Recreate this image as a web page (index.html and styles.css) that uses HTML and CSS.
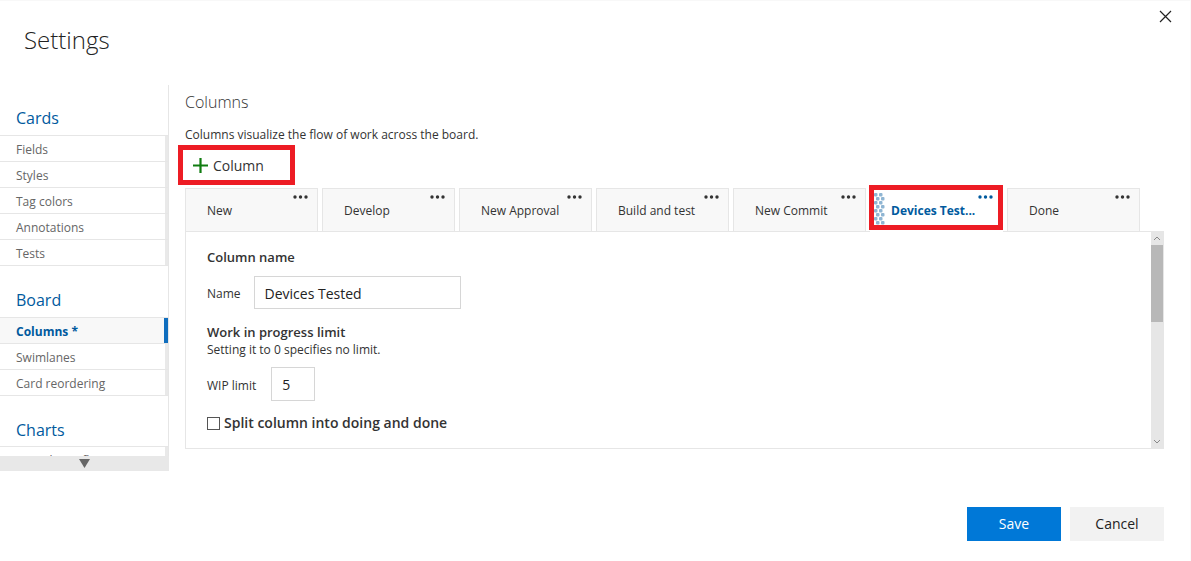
FILE: index.html
```html
<!DOCTYPE html>
<html lang="en">
<head>
<meta charset="utf-8">
<title>Settings</title>
<link rel="stylesheet" href="styles.css">
</head>
<body>
<div class="dialog">
  <header class="dialog-header">
    <h1 class="dialog-title">Settings</h1>
    <button class="close" type="button" aria-label="Close">
      <svg width="13" height="13" viewBox="0 0 13 13"><path d="M1 1l11 11M12 1L1 12" stroke="#222" stroke-width="1.200" fill="none"/></svg>
    </button>
  </header>
  <div class="dialog-body">
    <nav class="sidebar" aria-label="Settings sections">
      <div class="sidebar-scroll">
        <h2 class="group-title">Cards</h2>
        <ul class="group">
          <li><a class="nav-item" href="#fields">Fields</a></li>
          <li><a class="nav-item" href="#styles">Styles</a></li>
          <li><a class="nav-item" href="#tags">Tag colors</a></li>
          <li><a class="nav-item" href="#annotations">Annotations</a></li>
          <li><a class="nav-item" href="#tests">Tests</a></li>
        </ul>
        <h2 class="group-title">Board</h2>
        <ul class="group">
          <li><a class="nav-item active" href="#columns">Columns *</a></li>
          <li><a class="nav-item" href="#swimlanes">Swimlanes</a></li>
          <li><a class="nav-item" href="#reordering">Card reordering</a></li>
        </ul>
        <h2 class="group-title">Charts</h2>
        <ul class="group">
          <li><a class="nav-item" href="#cfd">Cumulative flow</a></li>
        </ul>
      </div>
      <button class="scroll-down" type="button" aria-label="Scroll down">
        <svg width="11" height="9" viewBox="0 0 11 9"><path d="M0 0h11L5.500 9z" fill="#666"/></svg>
      </button>
    </nav>
    <main class="content">
      <h2 class="content-title">Columns</h2>
      <p class="description">Columns visualize the flow of work across the board.</p>
      <button class="add-column" type="button">
        <svg width="15" height="15" viewBox="0 0 15 15"><path d="M7.500 0v15M0 7.500h15" stroke="#107c10" stroke-width="2.200" fill="none"/></svg>
        <span class="add-label">Column</span>
      </button>
      <div class="tabs" role="tablist">
        <button class="tab" role="tab" type="button"><span class="tab-label">New</span><svg class="dots" width="15" height="4" viewBox="0 0 15 4"><g fill="currentColor"><circle cx="2" cy="2" r="1.700"/><circle cx="7.500" cy="2" r="1.700"/><circle cx="13" cy="2" r="1.700"/></g></svg></button>
        <button class="tab" role="tab" type="button"><span class="tab-label">Develop</span><svg class="dots" width="15" height="4" viewBox="0 0 15 4"><g fill="currentColor"><circle cx="2" cy="2" r="1.700"/><circle cx="7.500" cy="2" r="1.700"/><circle cx="13" cy="2" r="1.700"/></g></svg></button>
        <button class="tab" role="tab" type="button"><span class="tab-label">New Approval</span><svg class="dots" width="15" height="4" viewBox="0 0 15 4"><g fill="currentColor"><circle cx="2" cy="2" r="1.700"/><circle cx="7.500" cy="2" r="1.700"/><circle cx="13" cy="2" r="1.700"/></g></svg></button>
        <button class="tab" role="tab" type="button"><span class="tab-label">Build and test</span><svg class="dots" width="15" height="4" viewBox="0 0 15 4"><g fill="currentColor"><circle cx="2" cy="2" r="1.700"/><circle cx="7.500" cy="2" r="1.700"/><circle cx="13" cy="2" r="1.700"/></g></svg></button>
        <button class="tab" role="tab" type="button"><span class="tab-label">New Commit</span><svg class="dots" width="15" height="4" viewBox="0 0 15 4"><g fill="currentColor"><circle cx="2" cy="2" r="1.700"/><circle cx="7.500" cy="2" r="1.700"/><circle cx="13" cy="2" r="1.700"/></g></svg></button>
        <button class="tab selected" role="tab" type="button" aria-selected="true">
          <svg class="grip" width="11" height="33" viewBox="0 0 11 33"><defs><pattern id="grip" width="5" height="8" patternUnits="userSpaceOnUse"><rect width="3.500" height="3.500" rx="1" fill="#8fb5d3"/></pattern></defs><rect width="9" height="33" fill="url(#grip)"/><g transform="translate(2 4)"><rect width="9" height="28" fill="url(#grip)"/></g></svg>
          <span class="tab-label">Devices Test...</span><svg class="dots" width="15" height="4" viewBox="0 0 15 4"><g fill="currentColor"><circle cx="2" cy="2" r="1.700"/><circle cx="7.500" cy="2" r="1.700"/><circle cx="13" cy="2" r="1.700"/></g></svg></button>
        <button class="tab" role="tab" type="button"><span class="tab-label">Done</span><svg class="dots" width="15" height="4" viewBox="0 0 15 4"><g fill="currentColor"><circle cx="2" cy="2" r="1.700"/><circle cx="7.500" cy="2" r="1.700"/><circle cx="13" cy="2" r="1.700"/></g></svg></button>
      </div>
      <section class="panel">
        <form class="form">
          <h3 class="section-title">Column name</h3>
          <div class="field name-field">
            <label for="name">Name</label>
            <input class="text-input" id="name" type="text" value="Devices Tested">
          </div>
          <h3 class="section-title">Work in progress limit</h3>
          <p class="hint">Setting it to 0 specifies no limit.</p>
          <div class="field wip-field">
            <label for="wip">WIP limit</label>
            <input class="text-input short" id="wip" type="text" value="5">
          </div>
          <div class="split">
            <input class="checkbox" id="split" type="checkbox">
            <label for="split">Split column into doing and done</label>
          </div>
        </form>
        <div class="scrollbar">
          <svg width="12" height="13" viewBox="0 0 12 13"><path d="M3 8l3-3 3 3" stroke="#888" fill="none"/></svg>
          <div class="track"><div class="thumb"></div></div>
          <svg width="12" height="13" viewBox="0 0 12 13"><path d="M3 5l3 3 3-3" stroke="#888" fill="none"/></svg>
        </div>
      </section>
    </main>
  </div>
  <footer class="actions">
    <button class="button primary" type="button">Save</button>
    <button class="button" type="button">Cancel</button>
  </footer>
</div>
</body>
</html>
```
FILE: styles.css
```css
* { box-sizing: border-box; }
body {
  margin: 0;
  background: #fff;
  color: #333;
  font: 12px/18px "Open Sans", "Noto Sans", sans-serif;
}
h1, h2, h3, p, ul { margin: 0; padding: 0; }
ul { list-style: none; }
button, input { font: inherit; color: inherit; margin: 0; }
button { border: 0; background: none; padding: 0; cursor: pointer; }
svg { display: block; flex: none; }

.dialog { border-top: 1px solid #f8f8f8; border-right: 1px solid #fafafa; padding-bottom: 20px; }
.dialog-header { display: flex; justify-content: space-between; align-items: flex-start; padding: 9px 18px 0 24px; height: 84px; }
.dialog-title { font-size: 24px; line-height: 34px; font-weight: 300; padding-top: 13px; color: #222; }

.dialog-body { display: flex; }
.sidebar { width: 169px; flex: none; border-right: 1px solid #e6e6e6; height: 386px; display: flex; flex-direction: column; }
.sidebar-scroll { flex: 1; min-height: 0; overflow: hidden; padding-top: 1px; }
.group-title { font-size: 16px; line-height: 24px; font-weight: 400; color: #005a9e; padding: 20px 0 5px 16px; }
.group-title + .group { border-top: 1px solid #e6e6e6; }
.group + .group-title { padding-top: 22px; }
.group-title:last-of-type { padding-bottom: 4px; }
.nav-item { display: block; height: 26px; line-height: 27px; padding-left: 16px; border-bottom: 1px solid #e6e6e6; box-shadow: inset -3px 0 #e9e9e9; color: #666; text-decoration: none; }
.nav-item.active { background: #f8f8f8; color: #005a9e; font-weight: 700; box-shadow: inset -4px 0 #106ebe; }
.scroll-down { height: 15px; flex: none; display: flex; justify-content: center; align-items: center; background: #e8e8e8; margin-right: -1px; }

.content { flex: 1; min-width: 0; padding: 5px 26px 0 16px; }
.content-title { font-size: 16px; line-height: 24px; font-weight: 300; }
.description { padding-top: 12px; }
.add-column { display: flex; align-items: center; gap: 5px; width: 117px; height: 40px; margin: 1px 0 3px -7px; padding-left: 10px; border: 5px solid #ed1c24; font-size: 14px; }
.add-label { padding-top: 2px; }

.tabs { display: flex; gap: 4px; }
.tab { position: relative; width: 133px; height: 44px; padding: 2px 21px 0; text-align: left; background: #f8f8f8; border: 1px solid #e6e6e6; }
.tab-label { white-space: nowrap; }
.dots { position: absolute; top: 6px; right: 9px; }
.tab.selected { padding-left: 20px; background: #fff; color: #005a9e; font-weight: 700; border-color: #fff; z-index: 1; }
.tab.selected::after { content: ""; position: absolute; inset: -4px -1px 1px -2px; border: 5px solid #ed1c24; }
.grip { position: absolute; left: 3px; top: 4px; }

.panel { display: flex; margin-top: -1px; border: 1px solid #e6e6e6; border-right: 0; }
.form { flex: 1; padding: 16px 21px 15px; }
.section-title { font-size: 13px; line-height: 18px; font-weight: 600; }
.field { display: flex; align-items: center; }
.field label { padding-top: 3px; }
.name-field { gap: 13px; padding: 10px 0 14px; }
.wip-field { gap: 15px; padding: 8px 0 12px; }
.text-input { width: 207px; height: 33px; padding: 1px 10px 0; border: 1px solid #d6d6d6; background: #fff; font-size: 14px; color: #222; }
.short { width: 44px; height: 34px; }
.split { display: flex; align-items: center; gap: 4px; font-size: 14px; line-height: 20px; font-weight: 600; }
.checkbox { appearance: none; width: 13px; height: 13px; border: 1px solid #555; background: #fff; }
.scrollbar { width: 13px; display: flex; flex-direction: column; background: #e6e6e6; }
.track { flex: 1; }
.thumb { width: 12px; height: 77px; background: #b8b8b8; }

.actions { display: flex; justify-content: flex-end; gap: 9px; padding: 36px 26px 0; }
.button { width: 94px; height: 34px; background: #f2f2f2; color: #222; font-size: 14px; }
.primary { background: #0078d7; color: #fff; }
```
